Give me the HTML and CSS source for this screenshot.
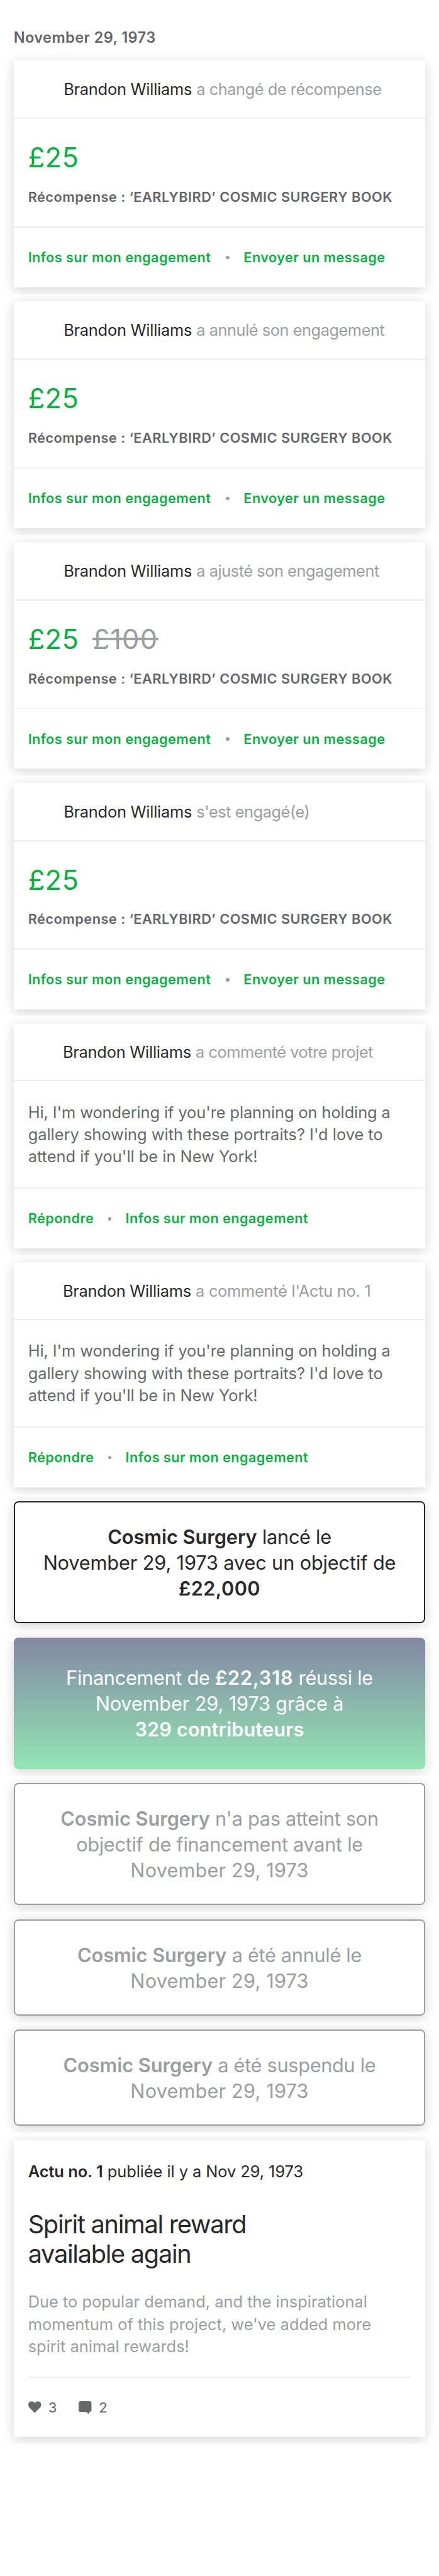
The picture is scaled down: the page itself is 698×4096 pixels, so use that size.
FILE: index.html
```
<!DOCTYPE html>
<html lang="fr">
<head>
<meta charset="utf-8">
<title>Activité du projet</title>
<link rel="stylesheet" href="styles.css">
</head>
<body>
<main class="feed">
  <h1 class="date">November 29, 1973</h1>

  <div class="row">
    <article class="card">
      <header class="head"><span class="name">Brandon Williams</span> <span class="action">a changé de récompense</span></header>
      <div class="rule"></div>
      <div class="pledge">
        <div class="amounts"><span class="amount">£25</span></div>
        <p class="reward">Récompense : ‘EARLYBIRD’ COSMIC SURGERY BOOK</p>
      </div>
      <div class="rule"></div>
      <footer class="links links--wide"><a class="link">Infos sur mon engagement</a><i class="dot"></i><a class="link">Envoyer un message</a></footer>
    </article>
  </div>

  <div class="row">
    <article class="card">
      <header class="head"><span class="name">Brandon Williams</span> <span class="action">a annulé son engagement</span></header>
      <div class="rule"></div>
      <div class="pledge">
        <div class="amounts"><span class="amount">£25</span></div>
        <p class="reward">Récompense : ‘EARLYBIRD’ COSMIC SURGERY BOOK</p>
      </div>
      <div class="rule"></div>
      <footer class="links links--wide"><a class="link">Infos sur mon engagement</a><i class="dot"></i><a class="link">Envoyer un message</a></footer>
    </article>
  </div>

  <div class="row">
    <article class="card">
      <header class="head"><span class="name">Brandon Williams</span> <span class="action">a ajusté son engagement</span></header>
      <div class="rule"></div>
      <div class="pledge">
        <div class="amounts"><span class="amount">£25</span><span class="amount amount--old">£100</span></div>
        <p class="reward">Récompense : ‘EARLYBIRD’ COSMIC SURGERY BOOK</p>
      </div>
      <div class="rule"></div>
      <footer class="links links--wide"><a class="link">Infos sur mon engagement</a><i class="dot"></i><a class="link">Envoyer un message</a></footer>
    </article>
  </div>

  <div class="row">
    <article class="card">
      <header class="head"><span class="name">Brandon Williams</span> <span class="action">s'est engagé(e)</span></header>
      <div class="rule"></div>
      <div class="pledge">
        <div class="amounts"><span class="amount">£25</span></div>
        <p class="reward">Récompense : ‘EARLYBIRD’ COSMIC SURGERY BOOK</p>
      </div>
      <div class="rule"></div>
      <footer class="links links--wide"><a class="link">Infos sur mon engagement</a><i class="dot"></i><a class="link">Envoyer un message</a></footer>
    </article>
  </div>

  <div class="row">
    <article class="card">
      <header class="head head--comment"><span class="name">Brandon Williams</span> <span class="action">a commenté votre projet</span></header>
      <div class="rule"></div>
      <p class="comment"><span class="first">Hi, I'm wondering if you're planning on holding a</span><br>gallery showing with these portraits? I'd love to<br>attend if you'll be in New York!</p>
      <div class="rule"></div>
      <footer class="links"><a class="link">Répondre</a><i class="dot"></i><a class="link">Infos sur mon engagement</a></footer>
    </article>
  </div>

  <div class="row">
    <article class="card">
      <header class="head head--comment"><span class="name">Brandon Williams</span> <span class="action action--update">a commenté l'Actu no. 1</span></header>
      <div class="rule"></div>
      <p class="comment"><span class="first">Hi, I'm wondering if you're planning on holding a</span><br>gallery showing with these portraits? I'd love to<br>attend if you'll be in New York!</p>
      <div class="rule"></div>
      <footer class="links"><a class="link">Répondre</a><i class="dot"></i><a class="link">Infos sur mon engagement</a></footer>
    </article>
  </div>

  <div class="row">
    <p class="card status status--launch"><b>Cosmic Surgery</b> lancé le<br><span class="mixed">November 29, 1973 avec un objectif de</span><br><b class="sum">£22,000</b></p>
  </div>

  <div class="row">
    <p class="card status status--success">Financement de <b class="sum sum--wide">£22,318</b> réussi le<br><span class="mixed">November 29, 1973 grâce à</span><br><b class="backers">329 contributeurs</b></p>
  </div>

  <div class="row">
    <p class="card status"><b>Cosmic Surgery</b> n'a pas atteint son<br>objectif de financement avant le<br><span class="day">November 29, 1973</span></p>
  </div>

  <div class="row">
    <p class="card status status--short"><b>Cosmic Surgery</b> a été annulé le<br><span class="day">November 29, 1973</span></p>
  </div>

  <div class="row">
    <p class="card status status--short"><b>Cosmic Surgery</b> a été suspendu le<br><span class="day">November 29, 1973</span></p>
  </div>

  <div class="row">
    <article class="card update">
      <p class="update-meta"><b>Actu no. 1</b> publiée il y a Nov 29, 1973</p>
      <h2 class="update-title">Spirit animal reward<br>available again</h2>
      <p class="update-body">Due to popular demand, and the inspirational<br>momentum of this project, we've added more<br>spirit animal rewards!</p>
      <div class="rule"></div>
      <footer class="counts">
        <span class="count"><svg class="icon" viewBox="0 0 33 33"><path d="M16.5 30.3 3 16.6C-.9 12.2-.7 6 2.700 2.600 6.600-1 13.300-.8 16.500 5.100 19.700-.8 26.400-1 30.300 2.600 33.700 6 33.900 12.200 30 16.600Z"/></svg>3</span>
        <span class="count"><svg class="icon" viewBox="0 0 33 33"><path d="M6 0H27Q33 0 33 6V22Q33 27.300 27 28V33L19.500 28H6Q0 28 0 22V6Q0 0 6 0Z"/></svg>2</span>
      </footer>
    </article>
  </div>
</main>
</body>
</html>
```
FILE: styles.css
```
/* 1rem = 100 design pixels */
html {
  font-size: 62.06px;
}

body {
  margin: 0;
  background: #fff;
  font-family: Inter, "Liberation Sans", sans-serif;
  color: #282828;
}

*,
*::before,
*::after {
  box-sizing: border-box;
}

p,
h1,
h2 {
  margin: 0;
  font-weight: 400;
}

b {
  font-weight: 600;
}

.feed {
  height: 4096px;
  overflow: hidden;
  white-space: nowrap;
}

.date {
  height: 1.37rem;
  padding: .655rem 0 0 .35rem;
  font-size: .38rem;
  line-height: .6rem;
  font-weight: 600;
  letter-spacing: .0164em;
  color: #656469;
}

/* Each row clips the shadow of its own card */
.row {
  padding: .18rem .36rem;
  overflow: hidden;
}

.card {
  background: #fff;
  box-shadow: 0 .06rem .3rem rgba(0, 0, 0, .17);
}

.rule {
  height: .03rem;
  background: #ededf2;
}

.head {
  height: 1.47rem;
  padding: .435rem 0 0 1.27rem;
  font-size: .41rem;
  line-height: .6rem;
}

.head--comment {
  height: 1.44rem;
  padding: .425rem 0 0 1.25rem;
}

.name {
  letter-spacing: -.0105em;
}

.action {
  letter-spacing: -.0195em;
  color: #9b9e9e;
}

.action--update {
  letter-spacing: -.0115em;
}

.pledge {
  height: 2.75rem;
  padding: .561rem .36rem 0;
}

.amounts {
  display: flex;
  gap: .355rem;
  height: .84rem;
  font-size: .7rem;
  line-height: .84rem;
}

.amount {
  letter-spacing: .01em;
  color: #05b33d;
}

.amount--old {
  padding-right: .005rem;
  letter-spacing: .028em;
  color: #9b9e9e;
  background: linear-gradient(#9b9e9e, #9b9e9e) 0 .39rem / 100% .06rem no-repeat;
}

.reward {
  margin-top: .382rem;
  font-size: .35rem;
  line-height: .44rem;
  font-weight: 600;
  letter-spacing: .0225em;
  color: #656469;
}

.links {
  display: flex;
  align-items: center;
  gap: .36rem;
  height: 1.53rem;
  padding: .01rem .36rem 0;
}

.link {
  font-size: .35rem;
  line-height: .44rem;
  font-weight: 600;
  letter-spacing: .019em;
  color: #05b33d;
}

.dot {
  width: .09rem;
  height: .09rem;
  border-radius: 50%;
  background: #9b9e9e;
}

.links--wide .dot {
  margin-left: .03rem;
}

.comment {
  height: 2.73rem;
  padding: .515rem .36rem 0;
  font-size: .41rem;
  line-height: .57rem;
  letter-spacing: -.001em;
  color: #656969;
}

.first {
  letter-spacing: -.0045em;
}

.status {
  height: 3.13rem;
  padding-top: calc(.597rem - 2px);
  border: 2px solid #9b9e9e;
  border-radius: .12rem;
  font-size: .495rem;
  line-height: .66rem;
  letter-spacing: -.01em;
  text-align: center;
  color: #9b9e9e;
}

.status b {
  letter-spacing: -.001em;
}

.status .sum {
  letter-spacing: .0123em;
}

.status .sum--wide {
  letter-spacing: .026em;
}

.status .backers {
  letter-spacing: .0035em;
}

.mixed {
  letter-spacing: -.0045em;
}

.day {
  letter-spacing: .0053em;
}

.status--short {
  height: 2.47rem;
}

.status--launch {
  border-color: #282828;
  color: #282828;
}

.status--success {
  height: 3.37rem;
  padding-top: .712rem;
  border: 0;
  color: #fff;
  background: linear-gradient(#8288a3, #93e6b4);
}

.update {
  height: 7.61rem;
  padding: .495rem .36rem 0;
}

.update-meta {
  font-size: .41rem;
  line-height: .6rem;
  letter-spacing: -.003em;
}

.update-title {
  margin-top: .692rem;
  font-size: .64rem;
  line-height: .77rem;
  letter-spacing: -.032em;
}

.update-body {
  margin: .534rem 0 .499rem;
  font-size: .41rem;
  line-height: .57rem;
  color: #9b9e9e;
}

.counts {
  display: flex;
  gap: .56rem;
  padding-top: .538rem;
  font-size: .35rem;
  line-height: .44rem;
  color: #656469;
}

.count {
  display: flex;
  align-items: flex-start;
  gap: .19rem;
}

.icon {
  width: .33rem;
  height: .33rem;
  margin-top: .055rem;
  fill: #656969;
}
```
